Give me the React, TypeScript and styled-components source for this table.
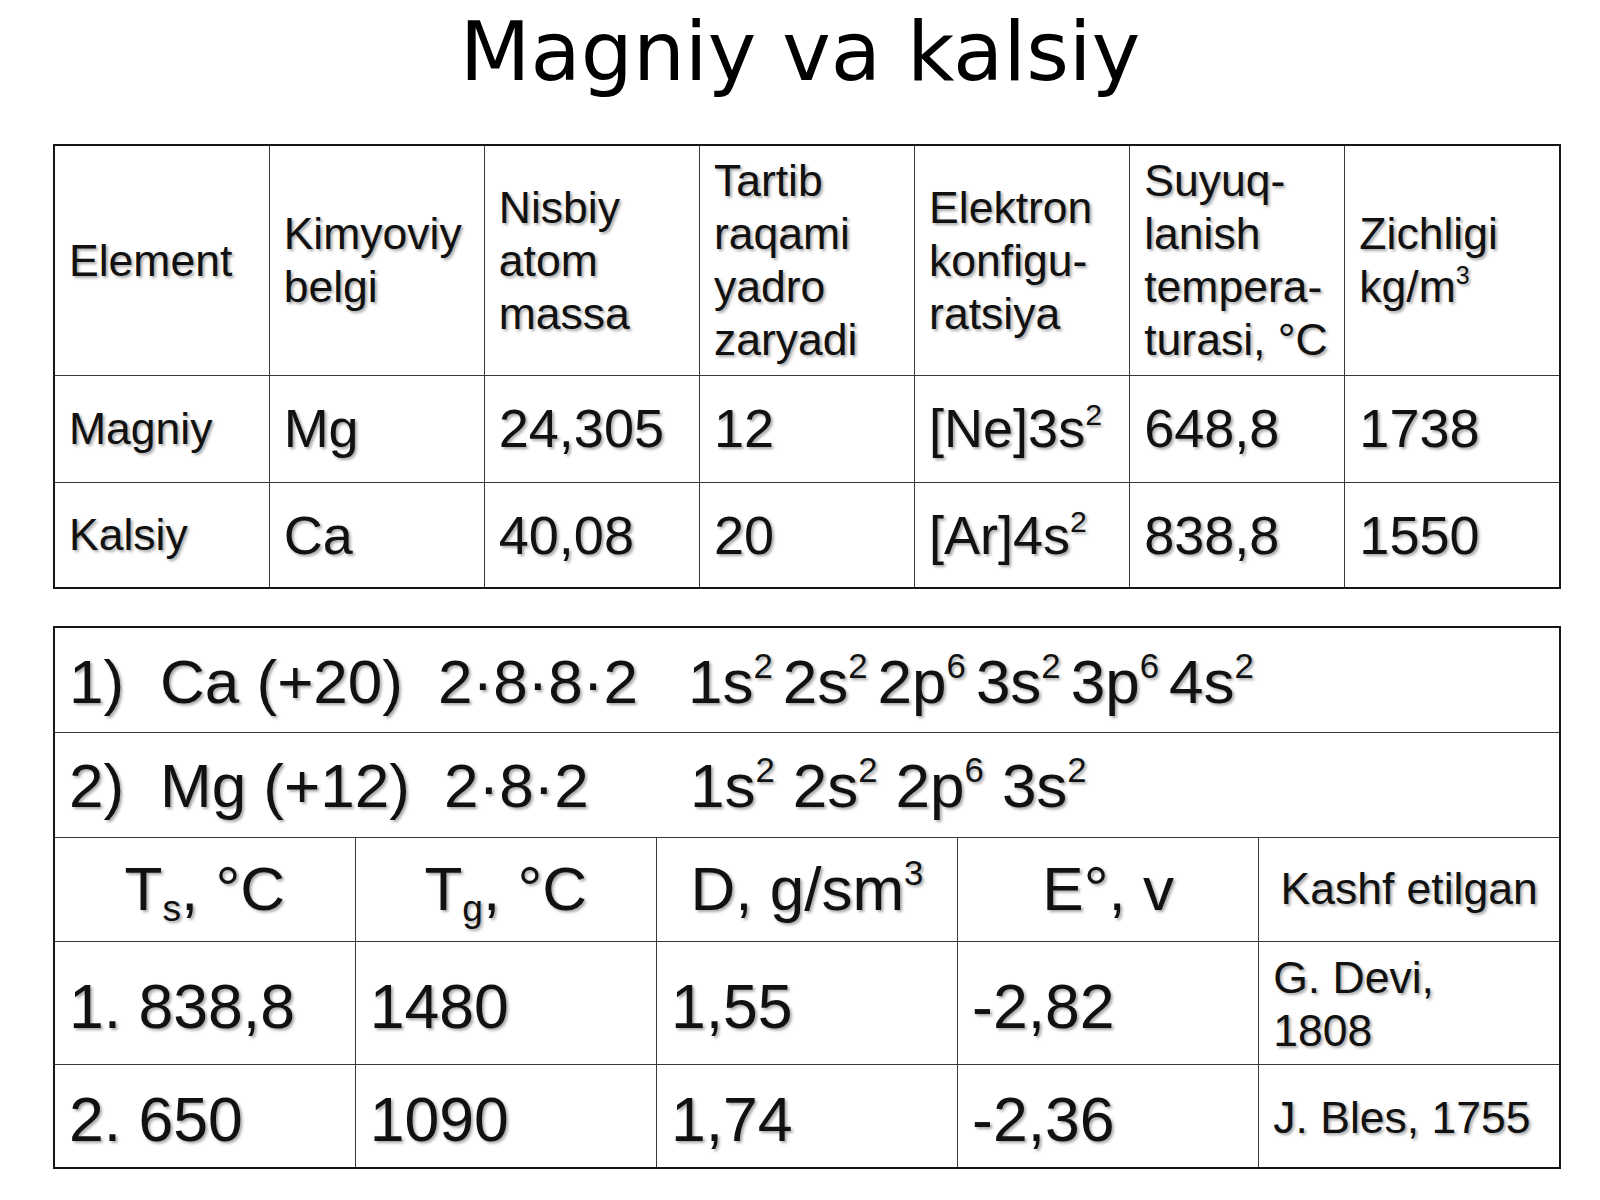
import React from 'react';
import styled, { createGlobalStyle } from 'styled-components';

const GlobalStyle = createGlobalStyle`
  body {
    margin: 0;
    background: #ffffff;
  }
`;

const Page = styled.div`
  width: 1600px;
  display: flex;
  flex-direction: column;
  padding-top: 4px;
`;

const Title = styled.h1`
  margin: 0 0 45px 0;
  text-align: center;
  font-family: 'DejaVu Sans', sans-serif;
  font-weight: 400;
  font-size: 82px;
  line-height: 95px;
  color: #000;
`;

const Tables = styled.div`
  display: flex;
  flex-direction: column;
  gap: 37px;
  padding-left: 53px;
`;

const Table = styled.table`
  width: 1508px;
  table-layout: fixed;
  border-collapse: collapse;
  border: 2px solid #161616;
  font-family: 'Liberation Sans', Arial, sans-serif;
  color: #111;
`;

const Row = styled.tr<{ $h: number }>`
  height: ${(p) => p.$h}px;
`;

const Cell = styled.td<{ $size?: number; $center?: boolean; $drop?: number }>`
  border: 1px solid #3a3a3a;
  padding: ${(p) => p.$drop ?? 0}px 0 0 ${(p) => (p.$center ? 0 : 14)}px;
  text-align: ${(p) => (p.$center ? 'center' : 'left')};
  vertical-align: middle;
  font-size: ${(p) => p.$size ?? 54}px;
  line-height: 1.15;
  white-space: nowrap;
  text-shadow: 2px 2px 3px rgba(0, 0, 0, 0.35);
`;

const HeadCell = styled(Cell)`
  font-size: 44.5px;
  line-height: 53px;
`;

const Sup = styled.sup`
  font-size: 0.56em;
  vertical-align: 0.72em;
  line-height: 0;
`;

const Sub = styled.sub`
  font-size: 0.6em;
  vertical-align: -0.3em;
  line-height: 0;
`;

const Line = styled.div`
  display: flex;
  align-items: baseline;
`;

const Seg = styled.span<{ $w: number }>`
  display: inline-block;
  width: ${(p) => p.$w}px;
`;

const Config = styled.span<{ $gap: number }>`
  display: inline-flex;
  gap: ${(p) => p.$gap}px;
`;

const elements = [
  { name: 'Magniy', sym: 'Mg', mass: '24,305', num: '12', core: '[Ne]3s', melt: '648,8', dens: '1738' },
  { name: 'Kalsiy', sym: 'Ca', mass: '40,08', num: '20', core: '[Ar]4s', melt: '838,8', dens: '1550' },
];

const props = [
  { melt: '1. 838,8', boil: '1480', dens: '1,55', pot: '-2,82', found: ['G. Devi,', '1808'], h: 123 },
  { melt: '2. 650', boil: '1090', dens: '1,74', pot: '-2,36', found: ['J. Bles, 1755'], h: 104 },
];

const Term = ({ base, pow }: { base: string; pow: string }) => (
  <span>
    {base}
    <Sup>{pow}</Sup>
  </span>
);

export default function App() {
  return (
    <Page>
      <GlobalStyle />
      <Title>Magniy va kalsiy</Title>

      <Tables>
        <Table>
          <tbody>
            <Row $h={230}>
              <HeadCell>Element</HeadCell>
              <HeadCell>
                Kimyoviy
                <br />
                belgi
              </HeadCell>
              <HeadCell>
                Nisbiy
                <br />
                atom
                <br />
                massa
              </HeadCell>
              <HeadCell>
                Tartib
                <br />
                raqami
                <br />
                yadro
                <br />
                zaryadi
              </HeadCell>
              <HeadCell>
                Elektron
                <br />
                konfigu-
                <br />
                ratsiya
              </HeadCell>
              <HeadCell>
                Suyuq-
                <br />
                lanish
                <br />
                tempera-
                <br />
                turasi, °C
              </HeadCell>
              <HeadCell>
                Zichligi
                <br />
                kg/m<Sup>3</Sup>
              </HeadCell>
            </Row>
            {elements.map((el, i) => (
              <Row key={el.sym} $h={i === 0 ? 107 : 106}>
                <Cell $size={44.5}>{el.name}</Cell>
                <Cell>{el.sym}</Cell>
                <Cell>{el.mass}</Cell>
                <Cell>{el.num}</Cell>
                <Cell>
                  {el.core}
                  <Sup>2</Sup>
                </Cell>
                <Cell>{el.melt}</Cell>
                <Cell>{el.dens}</Cell>
              </Row>
            ))}
          </tbody>
        </Table>

        <Table>
          <tbody>
            <Row $h={105}>
              <Cell colSpan={5} $size={62} $drop={3}>
                <Line>
                  <Seg $w={91}>1)</Seg>
                  <Seg $w={278}>Ca (+20)</Seg>
                  <Seg $w={250}>2·8·8·2</Seg>
                  <Config $gap={10}>
                    <Term base="1s" pow="2" />
                    <Term base="2s" pow="2" />
                    <Term base="2p" pow="6" />
                    <Term base="3s" pow="2" />
                    <Term base="3p" pow="6" />
                    <Term base="4s" pow="2" />
                  </Config>
                </Line>
              </Cell>
            </Row>
            <Row $h={105}>
              <Cell colSpan={5} $size={62} $drop={3}>
                <Line>
                  <Seg $w={91}>2)</Seg>
                  <Seg $w={284}>Mg (+12)</Seg>
                  <Seg $w={246}>2·8·2</Seg>
                  <Config $gap={18}>
                    <Term base="1s" pow="2" />
                    <Term base="2s" pow="2" />
                    <Term base="2p" pow="6" />
                    <Term base="3s" pow="2" />
                  </Config>
                </Line>
              </Cell>
            </Row>
            <Row $h={104}>
              <Cell $center $size={62}>
                T<Sub>s</Sub>, °C
              </Cell>
              <Cell $center $size={62}>
                T<Sub>g</Sub>, °C
              </Cell>
              <Cell $center $size={62}>
                D, g/sm<Sup>3</Sup>
              </Cell>
              <Cell $center $size={62}>
                E°, v
              </Cell>
              <Cell $center $size={44.5}>
                Kashf etilgan
              </Cell>
            </Row>
            {props.map((r) => (
              <Row key={r.melt} $h={r.h}>
                <Cell $size={62.5} $drop={8}>{r.melt}</Cell>
                <Cell $size={62.5} $drop={8}>{r.boil}</Cell>
                <Cell $size={62.5} $drop={8}>{r.dens}</Cell>
                <Cell $size={62.5} $drop={8}>{r.pot}</Cell>
                <HeadCell $drop={3}>
                  {r.found.map((t, j) => (
                    <React.Fragment key={t}>
                      {j > 0 && <br />}
                      {t}
                    </React.Fragment>
                  ))}
                </HeadCell>
              </Row>
            ))}
          </tbody>
        </Table>
      </Tables>
    </Page>
  );
}
